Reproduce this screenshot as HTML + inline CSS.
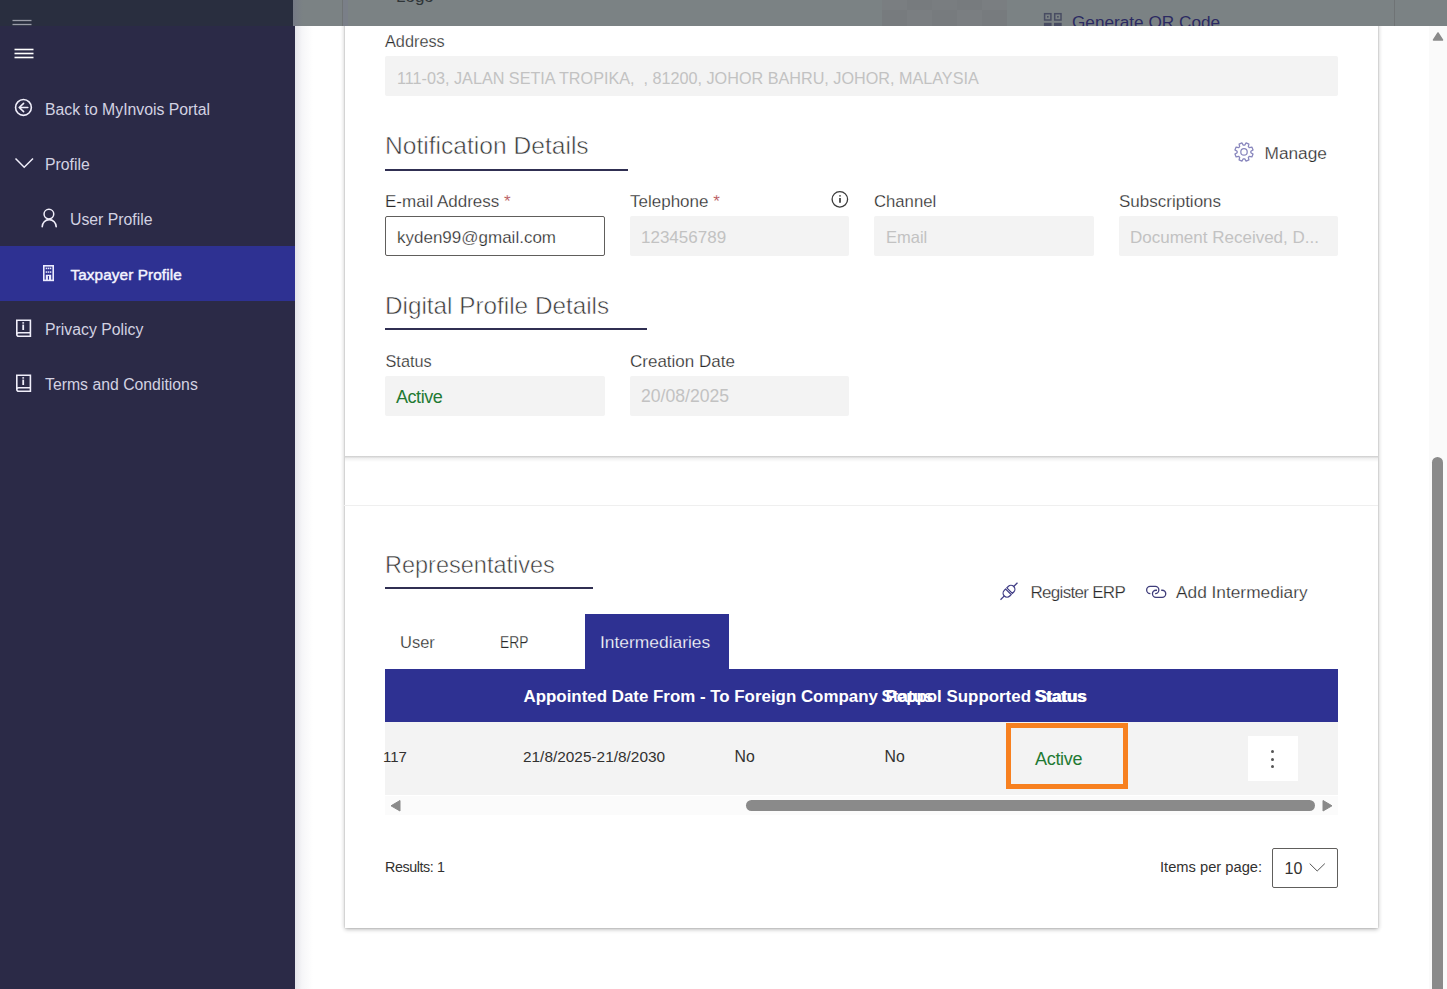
<!DOCTYPE html>
<html><head><meta charset="utf-8">
<style>
html,body{margin:0;padding:0;width:1447px;height:989px;overflow:hidden;background:#fff;}
body{position:relative;font-family:"Liberation Sans",sans-serif;}
.a{position:absolute;}
.t{position:absolute;white-space:pre;line-height:1;font-family:"Liberation Sans",sans-serif;}
.sb{color:#d3d2e2;font-size:15.8px;}
.lbl{color:#2a2a2a;font-size:17px;-webkit-text-stroke:0.25px #fff;}
.inp{position:absolute;background:#f3f3f3;border-radius:2px;height:40px;width:220px;}
.dis{color:#c2c2c2;font-size:17px;}
.h{color:#383838;font-size:24px;-webkit-text-stroke:0.55px #fff;}
.ul{position:absolute;height:2px;background:#302f52;}
.req{color:#a4262c;}
svg{position:absolute;overflow:visible;}
</style></head><body>

<!-- sidebar -->
<div class="a" style="left:0;top:0;width:295px;height:989px;background:#2b2a47;"></div>
<div class="a" style="left:0;top:246px;width:295px;height:55px;background:#2e3192;"></div>
<!-- main left shadow -->
<div class="a" style="left:295px;top:26px;width:18px;height:963px;background:linear-gradient(to right,#e4e4ea,#f6f6f8 40%,#fff);"></div>

<!-- hamburger -->
<svg style="left:0;top:0" width="60" height="70"><g stroke="#fff" stroke-width="1.6"><line x1="14.5" y1="49.5" x2="33.5" y2="49.5"/><line x1="14.5" y1="53.5" x2="33.5" y2="53.5"/><line x1="14.5" y1="57.5" x2="33.5" y2="57.5"/></g></svg>

<!-- sidebar items -->
<svg style="left:0;top:0" width="60" height="400" fill="none" stroke="#f0eefa" stroke-width="1.6">
  <circle cx="23.45" cy="107.45" r="7.9"/>
  <path d="M19.2 107.5 H27.8 M23.6 103.4 L19.2 107.5 L23.6 111.6" stroke-linecap="round" stroke-linejoin="round"/>
  <path d="M15.5 158.5 L24.2 167.3 L33 158.5" stroke-width="1.5"/>
  <circle cx="48.9" cy="214.1" r="4.85" stroke-width="1.5"/>
  <path d="M42.2 226.8 A7 7.2 0 0 1 56.2 226.8" stroke-width="1.6" stroke-linecap="round"/>
</svg>
<div class="t sb" style="left:45px;top:102px;">Back to MyInvois Portal</div>
<div class="t sb" style="left:45px;top:157px;">Profile</div>
<div class="t sb" style="left:70px;top:212px;">User Profile</div>
<!-- building icon -->
<svg style="left:0;top:0" width="60" height="300">
  <rect x="43.8" y="265.8" width="9.4" height="14.6" fill="none" stroke="#ececff" stroke-width="1.6"/>
  <g fill="#ececff">
    <rect x="45.7" y="267.6" width="1.5" height="1.6"/>
    <rect x="47.75" y="267.6" width="1.5" height="1.6"/>
    <rect x="49.8" y="267.6" width="1.5" height="1.6"/>
    <rect x="45.7" y="271.3" width="1.5" height="1.5"/>
    <rect x="47.75" y="271.3" width="1.5" height="1.5"/>
    <rect x="49.8" y="271.3" width="1.5" height="1.5"/>
    <path d="M45.8 281 V274.7 H51.2 V281 H49 V275.9 H47.9 V281 Z"/>
  </g>
</svg>
<div class="t" style="left:70.5px;top:267px;font-size:15.3px;color:#f4f4ff;-webkit-text-stroke:0.45px #f4f4ff;letter-spacing:0.1px;">Taxpayer Profile</div>
<!-- book icons -->
<svg style="left:0;top:0" width="60" height="420" fill="none" stroke="#f0eefa" stroke-width="1.6">
  <g id="bk">
  <path d="M16.8 334 V320.2 H30.4 V336.3 H18.8 Q16.8 336.3 16.8 334.3 Q16.8 332.8 18.8 332.8 H30.4"/>
  <line x1="23.2" y1="324.6" x2="23.2" y2="330" stroke-width="1.8"/>
  <line x1="23.2" y1="322.2" x2="23.2" y2="323.6" stroke-width="1.8"/>
  </g>
  <g transform="translate(0,55)">
  <path d="M16.8 334 V320.2 H30.4 V336.3 H18.8 Q16.8 336.3 16.8 334.3 Q16.8 332.8 18.8 332.8 H30.4"/>
  <line x1="23.2" y1="324.6" x2="23.2" y2="330" stroke-width="1.8"/>
  <line x1="23.2" y1="322.2" x2="23.2" y2="323.6" stroke-width="1.8"/>
  </g>
</svg>
<div class="t sb" style="left:45px;top:322px;">Privacy Policy</div>
<div class="t sb" style="left:45px;top:377px;">Terms and Conditions</div>

<!-- outer container -->
<div class="a" style="left:344.5px;top:-20px;width:1033.5px;height:948px;background:#fff;box-shadow:0 2px 4px rgba(0,0,0,.2),0 0 1.2px rgba(0,0,0,.22),-2px 0 4px rgba(0,0,0,.06),2px 0 4px rgba(0,0,0,.06);"></div>
<div class="a" style="left:344.5px;top:456px;width:1033.5px;height:6px;background:linear-gradient(to bottom,rgba(0,0,0,.2),rgba(0,0,0,.06) 40%,rgba(0,0,0,0));"></div>
<div class="a" style="left:344px;top:505px;width:1034px;height:1px;background:#efefef;"></div>
<!-- Address -->
<div class="t lbl" style="left:385px;top:33px;font-size:16.3px;">Address</div>
<div class="inp" style="left:385px;top:56px;width:953px;"></div>
<div class="t dis" style="left:397px;top:69.5px;font-size:16.2px;">111-03, JALAN SETIA TROPIKA,  , 81200, JOHOR BAHRU, JOHOR, MALAYSIA</div>

<!-- Notification details -->
<div class="t h" style="left:385px;top:133.5px;font-size:24.6px;">Notification Details</div>
<div class="ul" style="left:385px;top:169px;width:243px;"></div>
<!-- gear -->
<svg style="left:1234px;top:142px" width="20" height="20" viewBox="0 0 20 20"><path fill="none" stroke="#8886bd" stroke-width="1.25" stroke-linejoin="round" d="M10.78 3.14 L12.09 0.94 L14.93 2.11 L14.30 4.60 L15.40 5.70 L17.89 5.07 L19.06 7.91 L16.86 9.22 L16.86 10.78 L19.06 12.09 L17.89 14.93 L15.40 14.30 L14.30 15.40 L14.93 17.89 L12.09 19.06 L10.78 16.86 L9.22 16.86 L7.91 19.06 L5.07 17.89 L5.70 15.40 L4.60 14.30 L2.11 14.93 L0.94 12.09 L3.14 10.78 L3.14 9.22 L0.94 7.91 L2.11 5.07 L4.60 5.70 L5.70 4.60 L5.07 2.11 L7.91 0.94 L9.22 3.14 Z"/><circle cx="10" cy="9.9" r="3.2" fill="none" stroke="#8886bd" stroke-width="1.25"/></svg>
<div class="t lbl" style="left:1264.5px;top:145.3px;font-size:17.3px;">Manage</div>

<div class="t lbl" style="left:385px;top:193px;">E-mail Address <span class="req">*</span></div>
<div class="t lbl" style="left:630px;top:193px;">Telephone <span class="req">*</span></div>
<div class="t lbl" style="left:874px;top:193.5px;font-size:16.7px;">Channel</div>
<div class="t lbl" style="left:1119px;top:193px;">Subscriptions</div>
<svg style="left:0;top:0" width="1" height="1"><g transform="translate(0,0)"></g></svg>
<svg style="left:826px;top:186px" width="28" height="28" fill="none"><circle cx="13.85" cy="13.35" r="7.75" stroke="#3a3a3a" stroke-width="1.3"/><line x1="14" y1="12" x2="14" y2="16.8" stroke="#3a3a3a" stroke-width="1.7"/><line x1="14" y1="9.2" x2="14" y2="10.5" stroke="#3a3a3a" stroke-width="1.7"/></svg>

<div class="a" style="left:385px;top:216px;width:218px;height:38px;border:1px solid #605e5c;border-radius:2px;background:#fff;"></div>
<div class="t lbl" style="left:397px;top:229px;">kyden99@gmail.com</div>
<div class="inp" style="left:630px;top:216px;width:219px;"></div>
<div class="t dis" style="left:641px;top:229px;">123456789</div>
<div class="inp" style="left:874px;top:216px;"></div>
<div class="t dis" style="left:886px;top:229px;font-size:16.5px;">Email</div>
<div class="inp" style="left:1119px;top:216px;width:219px;"></div>
<div class="t dis" style="left:1130px;top:229px;">Document Received, D...</div>

<!-- Digital profile -->
<div class="t h" style="left:385px;top:293.8px;font-size:24.3px;">Digital Profile Details</div>
<div class="ul" style="left:385px;top:328px;width:262px;"></div>
<div class="t lbl" style="left:385.5px;top:353px;font-size:16.3px;">Status</div>
<div class="t lbl" style="left:630px;top:353px;">Creation Date</div>
<div class="inp" style="left:385px;top:376px;"></div>
<div class="t" style="left:396px;top:388px;font-size:18px;letter-spacing:-0.45px;color:#1f7a33;">Active</div>
<div class="inp" style="left:630px;top:376px;width:219px;"></div>
<div class="t dis" style="left:641px;top:388px;font-size:17.6px;">20/08/2025</div>

<!-- Representatives -->
<div class="t h" style="left:385px;top:553.5px;font-size:23.5px;">Representatives</div>
<div class="ul" style="left:385px;top:587px;width:208px;"></div>
<svg style="left:0;top:0" width="1" height="1"><g transform="translate(1009 591.2) rotate(-45)" fill="none" stroke="#413e86" stroke-width="1.25"><path d="M-12 0 H-6.6"/><path d="M-0.85 -3.9 H-2.8 A3.9 3.9 0 0 0 -2.8 3.9 H-0.85 Z"/><path d="M0.85 -3.9 H2.8 A3.9 3.9 0 0 1 2.8 3.9 H0.85 Z"/><path d="M6.6 0 H12"/></g></svg>
<div class="t lbl" style="left:1030.5px;top:584px;letter-spacing:-0.7px;">Register ERP</div>
<svg style="left:0;top:0" width="1" height="1"><g fill="none" stroke="#3f3d7a" stroke-width="1.3"><path d="M1150.4 593.55 H1150.2 A3.55 3.55 0 0 1 1150.2 586.45 H1155.3 A3.55 3.55 0 0 1 1155.3 593.55 H1155.1"/><path d="M1157 590.25 H1156 A3.55 3.55 0 0 0 1156 597.35 H1162.2 A3.55 3.55 0 0 0 1162.2 590.25 H1161.2"/></g></svg>
<div class="t lbl" style="left:1176px;top:584px;font-size:17.3px;">Add Intermediary</div>

<div class="t lbl" style="left:400px;top:634px;font-size:16.5px;">User</div>
<div class="t lbl" style="left:500px;top:634px;transform:scaleX(0.81);transform-origin:0 0;">ERP</div>
<div class="a" style="left:585px;top:614px;width:144px;height:56px;background:#2e3192;"></div>
<div class="t lbl" style="left:600px;top:634px;font-size:17.4px;color:#fff;-webkit-text-stroke:0.25px #2e3192;">Intermediaries</div>

<!-- table header -->
<div class="a" style="left:385px;top:669px;width:953px;height:53px;background:#2e3192;"></div>
<div class="t" style="left:523.5px;top:688.5px;font-size:16.9px;font-weight:bold;color:#fff;">Appointed Date From - To Foreign Company</div>
<div class="t" style="left:881.5px;top:688.5px;font-size:16.9px;font-weight:bold;color:#fff;">Status</div>
<div class="t" style="left:885.5px;top:688.5px;font-size:16.9px;font-weight:bold;color:#fff;">Peppol Supported Status</div>
<div class="t" style="left:1034.5px;top:688.5px;font-size:16.9px;font-weight:bold;color:#fff;">Status</div>
<!-- row -->
<div class="a" style="left:385px;top:722px;width:953px;height:73px;background:#f3f3f3;"></div>
<div class="t" style="left:383px;top:749px;font-size:15px;color:#323130;">117</div>
<div class="t" style="left:523px;top:749px;font-size:15.4px;color:#323130;">21/8/2025-21/8/2030</div>
<div class="t" style="left:734.5px;top:748.5px;font-size:15.8px;color:#323130;">No</div>
<div class="t" style="left:884.5px;top:748.5px;font-size:15.8px;color:#323130;">No</div>
<div class="a" style="left:1006px;top:723px;width:112px;height:56px;border:5px solid #f7801f;"></div>
<div class="t" style="left:1035px;top:749.5px;font-size:18px;letter-spacing:-0.3px;color:#1f7a33;">Active</div>
<div class="a" style="left:1248px;top:736px;width:50px;height:45px;background:#fff;"></div>
<div class="a" style="left:1271px;top:749.5px;width:3px;height:3px;border-radius:50%;background:#555;"></div>
<div class="a" style="left:1271px;top:757.5px;width:3px;height:3px;border-radius:50%;background:#555;"></div>
<div class="a" style="left:1271px;top:765px;width:3px;height:3px;border-radius:50%;background:#555;"></div>
<!-- h scrollbar -->
<div class="a" style="left:385px;top:795.5px;width:953px;height:19.5px;background:#fbfbfb;"></div>
<svg style="left:385px;top:795px" width="953" height="20"><path d="M6 10.8 L15 5.5 V16 Z" fill="#8a8a8a" stroke="#8a8a8a" stroke-width="1" stroke-linejoin="round"/><path d="M947 10.8 L938 5.5 V16 Z" fill="#8a8a8a" stroke="#8a8a8a" stroke-width="1" stroke-linejoin="round"/></svg>
<div class="a" style="left:746px;top:800px;width:569px;height:11px;border-radius:5.5px;background:#8a8a8a;"></div>

<!-- results -->
<div class="t" style="left:385px;top:860px;font-size:14.3px;letter-spacing:-0.4px;color:#323130;">Results: 1</div>
<div class="t" style="left:1160px;top:859.5px;font-size:14.7px;color:#323130;">Items per page:</div>
<div class="a" style="left:1272px;top:848px;width:64px;height:38px;border:1px solid #605e5c;border-radius:2px;"></div>
<div class="t" style="left:1284.5px;top:861.2px;font-size:16px;color:#323130;">10</div>
<svg style="left:1300px;top:855px" width="30" height="20"><path d="M9.7 8.6 L17.2 16 L24.8 8.6" fill="none" stroke="#555" stroke-width="1"/></svg>

<!-- vertical scrollbar -->
<div class="a" style="left:1429px;top:26px;width:18px;height:963px;background:#fafafa;"></div>
<svg style="left:1429px;top:26px" width="18" height="20"><path d="M9 7 L13.5 14 H4.5 Z" fill="#8a8a8a" stroke="#8a8a8a" stroke-linejoin="round" stroke-width="1.5"/></svg>
<div class="a" style="left:1432px;top:457px;width:11px;height:540px;border-radius:5.5px;background:#8a8a8a;"></div>

<!-- top strip -->
<div class="a" style="left:0;top:0;width:293px;height:26px;background:#292e3f;"></div>
<svg style="left:0;top:0" width="60" height="26"><g stroke="#9a9ca8" stroke-width="1.3"><line x1="12.5" y1="20.5" x2="31.5" y2="20.5"/><line x1="12.5" y1="24.5" x2="31.5" y2="24.5"/></g></svg>
<div class="a" style="left:293px;top:0;width:1154px;height:26px;background:#7b8284;overflow:hidden;">
  <div class="a" style="left:0;top:0;width:10px;height:26px;background:linear-gradient(to right,#757a86,#7b8284);"></div>
  <div class="a" style="left:49px;top:0;width:1px;height:26px;background:#6f7375;"></div>
  <div class="a" style="left:50px;top:0;width:5px;height:26px;background:#7a7f88;"></div>
  <div class="t" style="left:103px;top:-12px;font-size:17px;color:#2f3538;">Logo</div>
  <div class="a" style="left:589px;top:0;width:125px;height:26px;background:#777b7e;"></div>
  <div class="a" style="left:589px;top:0;width:25px;height:10px;background:#7a7e81;"></div>
  <div class="a" style="left:639px;top:0;width:25px;height:10px;background:#797d80;"></div>
  <div class="a" style="left:689px;top:0;width:25px;height:10px;background:#7a7e81;"></div>
  <div class="a" style="left:614px;top:10px;width:25px;height:16px;background:#7a7e81;"></div>
  <div class="a" style="left:664px;top:10px;width:25px;height:16px;background:#7a7e81;"></div>
  <svg style="left:750px;top:0" width="20" height="26"><g fill="none" stroke="#484c62" stroke-width="1.5"><rect x="1.6" y="13.7" width="6.3" height="6.3"/><rect x="11.7" y="13.7" width="6.3" height="6.3"/></g><g fill="#484c62"><rect x="4" y="16" width="1.6" height="1.6"/><rect x="14.1" y="16" width="1.6" height="1.6"/><rect x="0.9" y="22.8" width="7.7" height="3.2"/><rect x="11" y="22.8" width="7.7" height="3.2"/></g></svg>
  <div class="t" style="left:779px;top:14px;font-size:17.2px;color:#2b2a62;">Generate QR Code</div>
  <div class="a" style="left:1101px;top:0;width:1px;height:26px;background:#6f7375;"></div>
</div>

</body></html>
